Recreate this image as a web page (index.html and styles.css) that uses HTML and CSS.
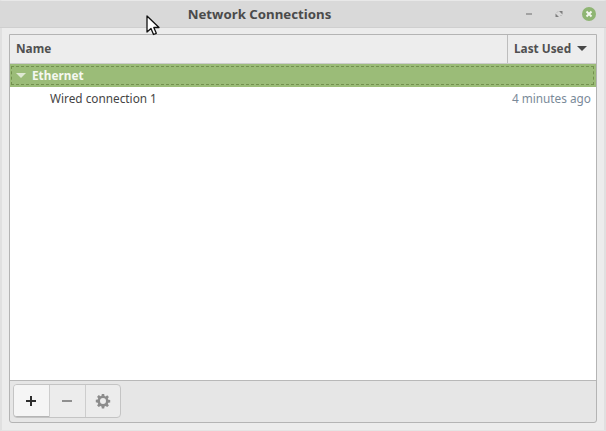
FILE: index.html
```html
<!DOCTYPE html>
<html lang="en">
<head>
<meta charset="utf-8">
<title>Network Connections</title>
<link rel="stylesheet" href="styles.css">
</head>
<body>
<div class="window">
  <header class="titlebar">
    <div class="title">Network Connections</div>
    <div class="controls">
      <svg class="ctl" width="16" height="16" viewBox="0 0 16 16"><rect x="5" y="7" width="6" height="2" fill="#a2a2a2"/></svg>
      <svg class="ctl" width="16" height="16" viewBox="0 0 16 16"><path d="M8 5h3.500v3.500zM8 11H4.500V7.500z" fill="#7e7e7e"/><path d="M6 6.500 7 5.500M9.500 10l1-1" stroke="#a8a8a8" stroke-width="1"/></svg>
      <svg class="ctl" width="16" height="16" viewBox="0 0 16 16"><circle cx="8" cy="8" r="7" fill="#8fb573"/><path d="M5.500 5.500l5 5M10.500 5.500l-5 5" stroke="#f4f7f0" stroke-width="2"/></svg>
    </div>
  </header>
  <main class="frame">
    <div class="columns">
      <div class="col col-name">Name</div>
      <div class="col col-used">Last Used <span class="sort"></span></div>
    </div>
    <div class="list">
      <div class="group">
        <div class="group-inner"><span class="expander"></span>Ethernet</div>
      </div>
      <div class="row">
        <span class="row-name">Wired connection 1</span>
        <span class="row-time">4 minutes ago</span>
      </div>
    </div>
    <footer class="toolbar">
      <div class="btns">
        <button class="btn btn-add" aria-label="Add"><svg width="12" height="12" viewBox="0 0 12 12"><path d="M6 1v10M1 6h10" stroke="#2e2e2e" stroke-width="2"/></svg></button>
        <button class="btn" aria-label="Remove"><svg width="12" height="12" viewBox="0 0 12 12"><path d="M1 6h10" stroke="#8f8f8f" stroke-width="2"/></svg></button>
        <button class="btn btn-gear" aria-label="Settings"><svg width="16" height="16" viewBox="0 0 16 16"><path fill="#8c8c8c" fill-rule="evenodd" d="M6.800 1h2.400l.3 1.900 1.100.5 1.600-1.100 1.700 1.700-1.100 1.600.5 1.100 1.900.3v2.400l-1.900.3-.5 1.100 1.100 1.600-1.700 1.700-1.600-1.100-1.100.5-.3 1.900H6.800l-.3-1.900-1.100-.5-1.600 1.100-1.700-1.700 1.100-1.600-.5-1.100L.8 9.200V6.800l1.900-.3.5-1.100-1.100-1.600 1.700-1.700 1.600 1.100 1.100-.5zM8 5a3 3 0 1 0 0 6 3 3 0 0 0 0-6z"/></svg></button>
      </div>
    </footer>
  </main>
</div>
<svg class="cursor" width="16" height="22" viewBox="0 0 16 22"><path d="M1 1v16l4-3.500 2.500 6 2.800-1.200-2.500-5.800H13z" fill="#fff" stroke="#111" stroke-width="1.300" stroke-linejoin="round"/></svg>
</body>
</html>
```
FILE: styles.css
```css
* { box-sizing: border-box; }
html, body { margin: 0; height: 100%; }
body {
  width: 606px;
  height: 431px;
  overflow: hidden;
  position: relative;
  background: #e0e0e0;
  font-family: "Noto Sans", "Open Sans", sans-serif;
  font-size: 11.800px;
  color: #404040;
}
.window {
  height: 431px;
  display: flex;
  flex-direction: column;
  background: #ececec;
  border-top: 1px solid #e8e8e8;
  border-left: 2px solid #e0e0e0;
  border-right: 2px solid #e0e0e0;
  border-bottom: 1px solid #e4e4e4;
}
.titlebar {
  height: 27px;
  flex: none;
  position: relative;
  display: flex;
  justify-content: flex-end;
  align-items: center;
  padding-right: 9px;
  background: #d9d9d9;
  border-bottom: 1px solid #cfcfcf;
  margin: 0 -2px;
}
.title {
  position: absolute;
  left: 0;
  width: 519px;
  top: 4px;
  text-align: center;
  font-weight: 700;
  font-size: 13.250px;
  line-height: 18px;
  color: #4b4b4b;
}
.controls { display: flex; gap: 14px; align-items: center; }
.ctl { display: block; }
.frame {
  flex: none;
  margin: 6px 7px 7px 7px;
  height: 389px;
  display: flex;
  flex-direction: column;
  border: 1px solid #b4b4b4;
  border-radius: 0 0 3px 3px;
  background: #e6e6e6;
}
.columns {
  height: 29px;
  flex: none;
  display: flex;
  background: #ededed;
  border-bottom: 1px solid #cbcbcb;
  font-weight: 700;
  line-height: 27px;
  color: #505050;
}
.col-name { flex: 1; padding-left: 6px; }
.col-used {
  width: 89px;
  padding-left: 6px;
  border-left: 1px solid #bdbdbd;
  white-space: nowrap;
}
.sort {
  display: inline-block;
  width: 0;
  height: 0;
  margin-left: 3px;
  vertical-align: 2px;
  border-left: 5px solid transparent;
  border-right: 5px solid transparent;
  border-top: 5px solid #484848;
}
.list {
  flex: 1;
  background: #fff;
  border-bottom: 1px solid #b8b8b8;
}
.group {
  height: 23px;
  padding: 2px 2px 2px 1px;
  background: #9bbc78;
}
.group-inner {
  height: 19px;
  display: flex;
  align-items: center;
  padding: 0 0 2px 4px;
  border: 1px dashed #73914f;
  font-weight: 700;
  color: #f5f8f0;
}
.expander {
  width: 0;
  height: 0;
  margin: 2px 6px 0 0;
  border-left: 5px solid transparent;
  border-right: 5px solid transparent;
  border-top: 5px solid #dfe9d3;
}
.row {
  height: 23px;
  display: flex;
  justify-content: space-between;
  align-items: center;
  padding: 0 5px 2px 40px;
  color: #454545;
}
.row-time { color: #7a8a99; }
.toolbar {
  flex: none;
  height: 41px;
  padding: 3px 0 0 3px;
}
.btns {
  display: inline-flex;
  height: 34px;
  border: 1px solid #c4c4c4;
  border-radius: 4px;
  background: #ececec;
}
.btn {
  width: 36px;
  padding: 0 1px 0 0;
  border: 0;
  border-right: 1px solid #cdcdcd;
  background: transparent;
  display: flex;
  align-items: center;
  justify-content: center;
}
.btn:last-child { border-right: 0; width: 34px; }
.btn-add {
  background: #f5f5f5;
  border-radius: 3px 0 0 3px;
  border-bottom: 1px solid #b5b5b5;
}
.cursor { position: absolute; left: 146px; top: 15px; }
```
